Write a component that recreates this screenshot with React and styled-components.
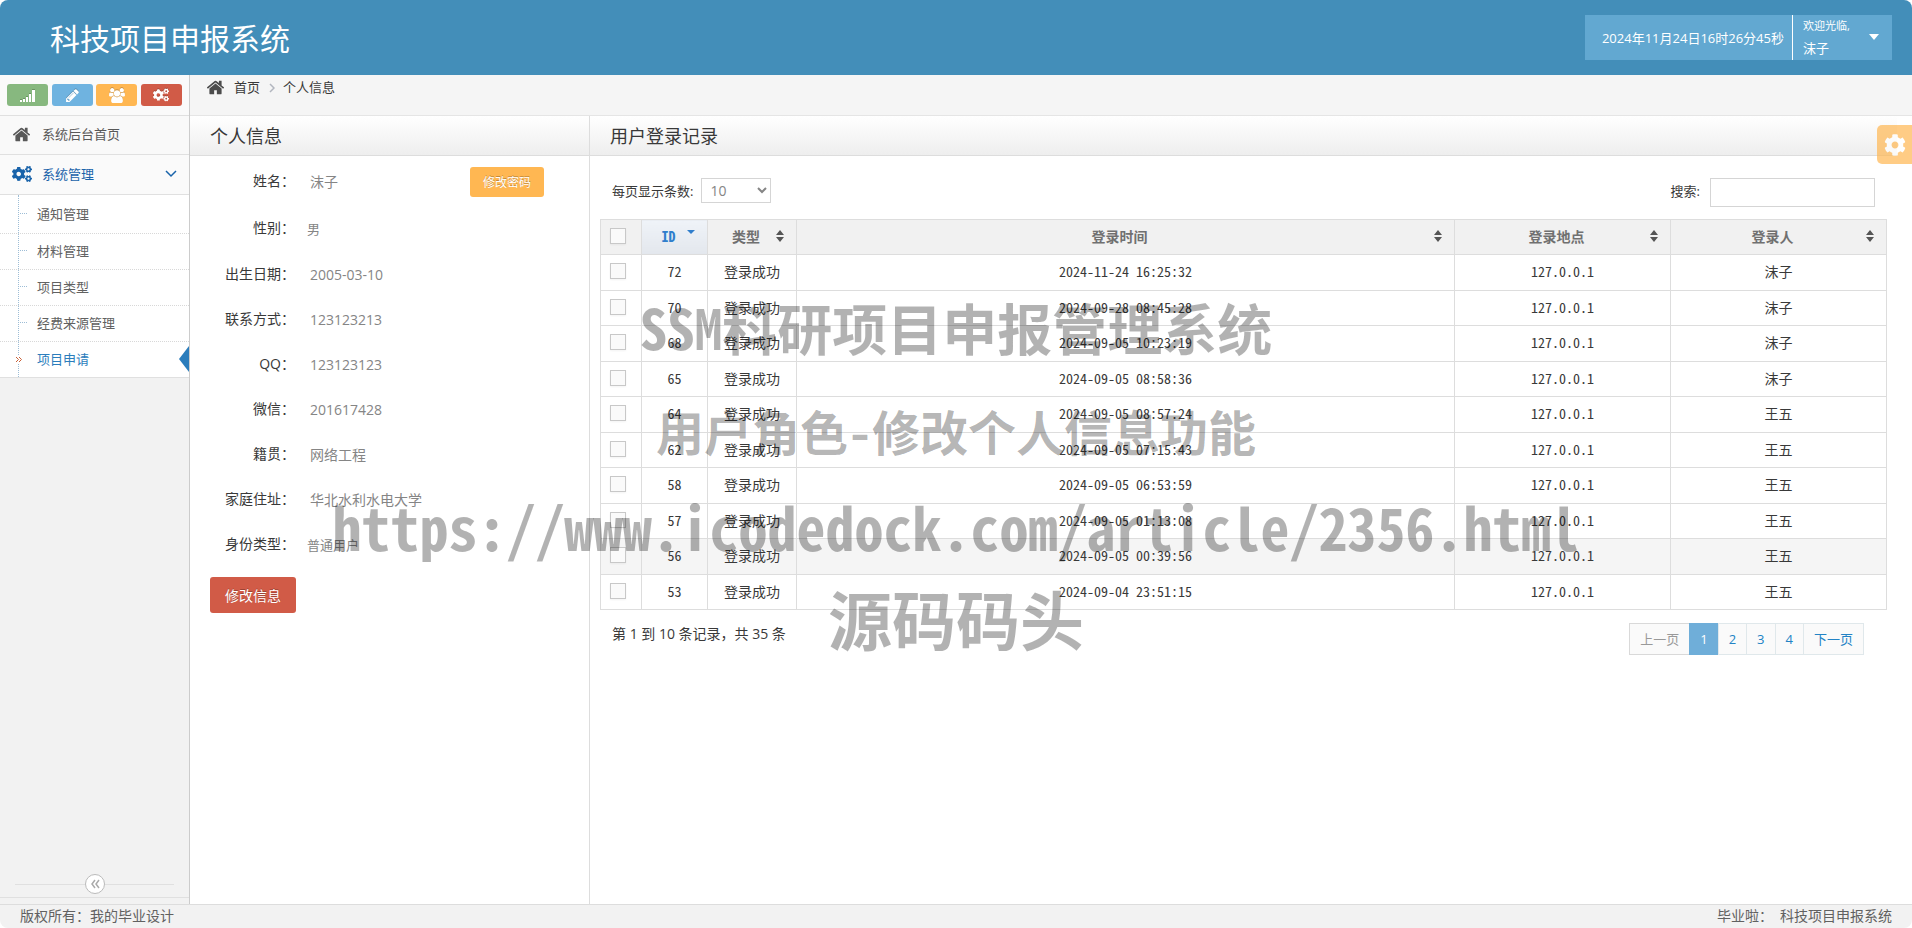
import React, { useState } from "react";
import { styled, createGlobalStyle, css } from "styled-components";
import { FaCog, FaCogs } from "react-icons/fa";

const GlobalStyle = createGlobalStyle`
  * {
    box-sizing: border-box;
  }

  body {
    margin: 0;
    background: #fff;
    color: #393939;
    font-family: "Open Sans", "Noto Sans CJK SC", sans-serif;
    font-size: 13px;
    line-height: 20px;
  }

  a {
    color: inherit;
    text-decoration: none;
  }

  button, input, select {
    font-family: inherit;
  }
`;

const monoFont = `"Noto Sans Mono CJK SC", "Liberation Mono", "Noto Sans CJK SC", monospace`;

const Page = styled.div`
  position: relative;
  display: flex;
  flex-direction: column;
  min-height: 100vh;
  border-radius: 8px;
  overflow: hidden;
`;

const Navbar = styled.header`
  display: flex;
  justify-content: space-between;
  align-items: center;
  height: 75px;
  padding: 0 20px 0 50px;
  background: #438eb9;
  color: #fff;
`;

const Brand = styled.a`
  font-size: 30px;
  line-height: 40px;
  padding-top: 2px;
`;

const UserBar = styled.div`
  display: flex;
  height: 45px;
  background: #62a8d1;
`;

const Clock = styled.div`
  padding: 0 8px 0 17px;
  line-height: 46px;
  border-right: 1px solid #fff;
`;

const UserMenu = styled.button`
  display: flex;
  align-items: center;
  justify-content: space-between;
  width: 99px;
  padding: 0 13px 2px 10px;
  border: 0;
  background: transparent;
  color: #fff;
  font-size: 13px;
  line-height: 22px;
  text-align: left;
  cursor: pointer;

  small {
    display: block;
    font-size: 11px;
  }
`;

const Caret = styled.span`
  border: 5px solid transparent;
  border-top: 6px solid #fff;
  border-bottom: 0;
`;

const Main = styled.div`
  flex: 1;
  display: flex;
`;

const Sidebar = styled.aside`
  display: flex;
  flex-direction: column;
  flex: 0 0 190px;
  padding-bottom: 6px;
  border-right: 1px solid #ccc;
  background: #f2f2f2;
`;

const Shortcuts = styled.div`
  display: flex;
  justify-content: space-between;
  align-items: center;
  height: 40px;
  padding: 0 7px;
  background: #fafafa;
`;

const ShortcutButton = styled.button`
  display: flex;
  align-items: center;
  justify-content: center;
  width: 41px;
  height: 22px;
  padding: 0;
  border: 0;
  border-radius: 3px;
  background: ${(props) => props.$color};
  color: #fff;
  cursor: pointer;

  svg {
    filter: drop-shadow(0 -1px 0 rgba(0, 0, 0, 0.2));
  }
`;

const NavItem = styled.a`
  display: flex;
  align-items: center;
  height: ${(props) => (props.$open ? "40px" : "39px")};
  padding: 0 12px 2px;
  border-top: 1px solid #e0e0e0;
  background: ${(props) => (props.$open ? "#fafafa" : "#f9f9f9")};
  color: ${(props) => (props.$open ? "#1963aa" : "#585858")};

  span {
    flex: 1;
  }
`;

const NavIcon = styled.i`
  display: flex;
  width: 30px;
`;

const SubMenu = styled.ul`
  position: relative;
  margin: 0;
  padding: 2px 0 0;
  list-style: none;
  background: #fff;
  border-top: 1px solid #e0e0e0;
  border-bottom: 1px solid #e0e0e0;

  &::before {
    content: "";
    position: absolute;
    top: 0;
    bottom: 0;
    left: 18px;
    border-left: 1px dotted #9dbdd6;
  }
`;

const SubItem = styled.li`
  position: relative;
  height: 36px;
  padding-left: 37px;
  line-height: 34px;
  color: ${(props) => (props.$active ? "#2b7dbc" : "#616161")};

  & + & {
    border-top: 1px dotted #d8d8d8;
  }

  &::before {
    content: "";
    position: absolute;
    top: 16px;
    left: 20px;
    width: 7px;
    border-top: ${(props) => (props.$active ? "0" : "1px dotted #9dbdd6")};
  }

  svg {
    position: absolute;
    top: 13px;
    left: 14px;
    background: #fff;
  }

  ${(props) => props.$active && css`
    &::after {
      content: "";
      position: absolute;
      top: 4px;
      right: 0;
      border: 13px solid transparent;
      border-left: 0;
      border-right: 10px solid #2b7dbc;
    }
  `}
`;

const SidebarCollapse = styled.div`
  display: flex;
  align-items: center;
  margin-top: auto;
  padding: 3px 15px;
  border-bottom: 1px solid #e0e0e0;

  &::before, &::after {
    content: "";
    flex: 1;
    border-top: 1px solid #e0e0e0;
  }

  button {
    display: flex;
    align-items: center;
    justify-content: center;
    width: 20px;
    height: 20px;
    padding: 0;
    border: 1px solid #bbb;
    border-radius: 50%;
    background: #fff;
    color: #aaa;
  }
`;

const Content = styled.main`
  flex: 1;
  min-width: 0;
  display: flex;
  flex-direction: column;
`;

const Breadcrumb = styled.nav`
  display: flex;
  align-items: center;
  height: 41px;
  padding: 0 16px 16px;
  border-bottom: 1px solid #e5e5e5;
  background: #f5f5f5;

  svg {
    color: #4c4c4c;
    margin-right: 9px;
  }

  svg + a + svg {
    color: #b2b6bf;
    margin: 2px 8px 0 9px;
  }
`;

const Columns = styled.div`
  flex: 1;
  display: flex;
`;

const ProfilePanel = styled.section`
  flex: 0 0 400px;
  border-right: 1px solid #ddd;
`;

const LogPanel = styled.section`
  flex: 1;
  min-width: 0;
  padding-right: 15px;
`;

const PanelTitle = styled.h4`
  height: 40px;
  margin: 0;
  padding-left: 20px;
  border-bottom: 1px solid #ddd;
  background: linear-gradient(#fff, #eee);
  font-size: 18px;
  font-weight: 400;
  line-height: 41px;
`;

const Profile = styled.dl`
  margin: 0;
  padding-top: 2px;
`;

const ProfileRow = styled.div`
  display: flex;
  align-items: center;
  height: ${(props) => (props.$tall ? "47px" : "45px")};
  font-size: 14px;

  dt {
    width: 105px;
    padding-bottom: 2px;
    text-align: right;
  }

  dd {
    flex: 1;
    margin: 0;
    padding-left: ${(props) => (props.$plain ? "12px" : "15px")};
    color: #858585;
    font-size: ${(props) => (props.$plain ? "13px" : "14px")};
  }
`;

const Button = styled.button`
  border: 0;
  border-radius: 3px;
  color: #fff;
  cursor: pointer;
  text-shadow: 0 -1px 0 rgba(0, 0, 0, 0.25);
`;

const PasswordButton = styled(Button)`
  width: 74px;
  height: 30px;
  margin-right: 45px;
  padding: 0;
  background: #ffb752;
  font-size: 12px;
`;

const EditButton = styled(Button)`
  width: 86px;
  height: 36px;
  margin: 10px 0 0 20px;
  padding: 0;
  background: #d15b47;
  font-size: 14px;
`;

const LogBody = styled.div`
  padding: 0 10px;
`;

const Toolbar = styled.div`
  display: flex;
  justify-content: space-between;
  height: 63px;
  padding: 22px 12px 0;
  line-height: 26px;

  select {
    width: 70px;
    height: 25px;
    margin-left: 8px;
    padding: 0 4px;
    border: 1px solid #d5d5d5;
    background: #fff;
    color: #858585;
    font-size: 14px;
  }

  input {
    width: 165px;
    height: 29px;
    margin-left: 10px;
    border: 1px solid #d5d5d5;
  }

  label {
    display: flex;
    align-items: flex-start;
  }
`;

const Table = styled.table`
  width: 100%;
  table-layout: fixed;
  border-collapse: collapse;
  font-family: ${monoFont};
  font-size: 14px;

  th, td {
    padding: 0 0 3px;
    border: 1px solid #ddd;
    text-align: center;
  }

  th {
    height: 35px;
    background: #f1f1f1;
    color: #707070;
  }

  td {
    height: 35px;
  }

  tr:nth-child(odd) td {
    height: 36px;
  }
`;

const LogRow = styled.tr`
  background: ${(props) => (props.$hover ? "#f5f5f5" : "#fff")};
`;

const SortHeader = styled.th`
  && {
    color: ${(props) => (props.$sorted ? "#307ecc" : "#707070")};
    background: ${(props) => (props.$sorted ? "linear-gradient(#eff3f8, #e3e7ed)" : "#f1f1f1")};
  }

  div {
    display: flex;
    align-items: center;
    padding: 0 12px 0 8px;
  }

  span {
    flex: 1;
  }
`;

const Checkbox = styled.input`
  appearance: none;
  display: block;
  width: 16px;
  height: 16px;
  margin: 0 0 0 9px;
  border: 1px solid #c8c8c8;
  background: #fafafa;
  box-shadow: 0 1px 2px rgba(0, 0, 0, 0.05);

  &:checked {
    background: #6faed9;
  }
`;

const TableFooter = styled.div`
  display: flex;
  justify-content: space-between;
  padding: 13px 23px 0 12px;
  font-size: 14px;
  line-height: 22px;
`;

const Pagination = styled.nav`
  display: flex;
  font-size: 13px;
`;

const PageLink = styled.a`
  height: 32px;
  padding: 0 10px;
  margin-left: -1px;
  border: 1px solid ${(props) => (props.$active ? "#6faed9" : "#e0e8eb")};
  background: ${(props) => (props.$active ? "#6faed9" : "#fafafa")};
  color: ${(props) => (props.$active ? "#fff" : "#2283c5")};
  line-height: 31px;

  ${(props) => props.$disabled && css`
    border-color: #d9d9d9;
    color: #999;
  `}
`;

const Footer = styled.footer`
  display: flex;
  justify-content: space-between;
  height: 24px;
  padding: 0 20px;
  border-top: 1px solid #ddd;
  background: #f2f2f2;
  color: #616161;
  font-family: ${monoFont};
  font-size: 14px;
  line-height: 21px;
  white-space: pre;
`;

const SettingsButton = styled.button`
  position: absolute;
  top: 125px;
  right: 0;
  display: flex;
  align-items: center;
  justify-content: center;
  width: 35px;
  height: 39px;
  padding: 0;
  border: 0;
  border-radius: 5px 0 0 5px;
  background: #ffb752;
  color: #fff;
  opacity: 0.7;
`;

const Watermark = styled.div`
  position: absolute;
  top: 274px;
  left: 0;
  right: 0;
  color: rgba(0, 0, 0, 0.3);
  font-family: ${monoFont};
  font-weight: 700;
  text-align: center;
  white-space: nowrap;
  pointer-events: none;
`;

const WatermarkLine = styled.div`
  font-size: ${(props) => props.$size}px;
  line-height: ${(props) => props.$height}px;
`;

const HomeIcon = ({ size }) => (
  <svg width={size} height={size} viewBox="0 0 1792 1792" fill="currentColor">
    <path d="M1472 992v480q0 26-19 45t-45 19h-384v-384h-256v384h-384q-26 0-45-19t-19-45v-480q0-1 .5-3t.5-3l575-474 575 474q1 2 1 6zm223-69l-62 74q-8 9-21 11h-3q-13 0-21-7l-692-577-692 577q-12 8-24 7-13-2-21-11l-62-74q-8-10-7-23.5t11-21.5l719-599q32-26 76-26t76 26l244 204v-195q0-14 9-23t23-9h192q14 0 23 9t9 23v408l219 182q10 8 11 21.5t-7 23.5z" />
  </svg>
);

const SignalIcon = () => (
  <svg width="15" height="13" viewBox="0 0 15 13" fill="currentColor">
    <path d="M0 11h2v2H0zM3 10h2v3H3zM6 8h2v5H6zM9 5h2v8H9zM12 1h3v12h-3z" />
  </svg>
);

const PencilIcon = () => (
  <svg width="15" height="15" viewBox="0 0 1792 1792" fill="currentColor">
    <path d="M491 1536l91-91-235-235-91 91v107h128v128h107zm523-928q0-22-22-22-10 0-17 7l-542 542q-7 7-7 17 0 22 22 22 10 0 17-7l542-542q7-7 7-17zm-54-192l416 416-832 832h-416v-416zm683 96q0 53-37 90l-166 166-416-416 166-165q36-38 90-38 53 0 91 38l235 234q37 39 37 91z" />
  </svg>
);

const GroupIcon = () => (
  <svg width="16" height="15" viewBox="0 0 1920 1792" fill="currentColor">
    <path d="M593 896q-162 5-265 128h-134q-82 0-138-40.5t-56-118.5q0-353 124-353 6 0 43.5 21t97.5 42.5 119 21.5q67 0 133-23-5 37-5 66 0 139 81 256zm1071 637q0 120-73 189.5t-194 69.5h-874q-121 0-194-69.5t-73-189.5q0-53 3.5-103.5t14-109 26.5-108.5 43-97.5 62-81 85.5-53.5 111.5-20q10 0 43 21.5t73 48 107 48 135 21.5 135-21.5 107-48 73-48 43-21.5q61 0 111.5 20t85.5 53.5 62 81 43 97.5 26.5 108.5 14 109 3.5 103.5zm-1024-1277q0 106-75 181t-181 75-181-75-75-181 75-181 181-75 181 75 75 181zm704 384q0 159-112.5 271.5t-271.5 112.5-271.5-112.5-112.5-271.5 112.5-271.5 271.5-112.5 271.5 112.5 112.5 271.5zm576 225q0 78-56 118.5t-138 40.5h-134q-103-123-265-128 81-117 81-256 0-29-5-66 66 23 133 23 59 0 119-21.5t97.5-42.5 43.5-21q124 0 124 353zm-128-609q0 106-75 181t-181 75-181-75-75-181 75-181 181-75 181 75 75 181z" />
  </svg>
);

const LineIcon = ({ d, width, height, color = "currentColor", stroke = 1.5 }) => (
  <svg width={width} height={height} viewBox={`0 0 ${width} ${height}`} fill="none" stroke={color} strokeWidth={stroke}>
    <path d={d} />
  </svg>
);

const SortIcon = ({ sorted }) => (
  <svg width="8" height="12" viewBox="0 0 8 12" fill={sorted ? "#307ecc" : "#555"}>
    {sorted ? <path d="M0 0h8L4 4z" /> : <path d="M4 0l4 5H0zM0 7h8l-4 5z" />}
  </svg>
);

const shortcuts = [
  { label: "统计", color: "#87b87f", icon: <SignalIcon /> },
  { label: "编辑", color: "#6fb3e0", icon: <PencilIcon /> },
  { label: "用户", color: "#ffb752", icon: <GroupIcon /> },
  { label: "设置", color: "#d15b47", icon: <FaCogs size={16} /> },
];

const subMenu = ["通知管理", "材料管理", "项目类型", "经费来源管理", "项目申请"];

const profile = [
  { label: "姓名", value: "沫子", tall: true, password: true },
  { label: "性别", value: "男", tall: true, plain: true },
  { label: "出生日期", value: "2005-03-10" },
  { label: "联系方式", value: "123123213" },
  { label: "QQ", value: "123123123" },
  { label: "微信", value: "201617428" },
  { label: "籍贯", value: "网络工程" },
  { label: "家庭住址", value: "华北水利水电大学" },
  { label: "身份类型", value: "普通用户", plain: true },
];

const columns = ["ID", "类型", "登录时间", "登录地点", "登录人"];

const logs = [
  { id: 72, time: "2024-11-24 16:25:32", user: "沫子" },
  { id: 70, time: "2024-09-28 08:45:28", user: "沫子" },
  { id: 68, time: "2024-09-05 10:23:19", user: "沫子" },
  { id: 65, time: "2024-09-05 08:58:36", user: "沫子" },
  { id: 64, time: "2024-09-05 08:57:24", user: "王五" },
  { id: 62, time: "2024-09-05 07:15:43", user: "王五" },
  { id: 58, time: "2024-09-05 06:53:59", user: "王五" },
  { id: 57, time: "2024-09-05 01:13:08", user: "王五" },
  { id: 56, time: "2024-09-05 00:39:56", user: "王五" },
  { id: 53, time: "2024-09-04 23:51:15", user: "王五" },
];

const App = () => {
  const [selected, setSelected] = useState([]);
  const [hovered, setHovered] = useState(56);

  function toggle(id) {
    setSelected(selected.includes(id) ? selected.filter((item) => item !== id) : [...selected, id]);
  }

  function toggleAll() {
    setSelected(selected.length === logs.length ? [] : logs.map((log) => log.id));
  }

  return (
    <Page>
      <GlobalStyle />
      <Navbar>
        <Brand href="#">科技项目申报系统</Brand>
        <UserBar>
          <Clock>2024年11月24日16时26分45秒</Clock>
          <UserMenu>
            <span><small>欢迎光临,</small>沫子</span>
            <Caret />
          </UserMenu>
        </UserBar>
      </Navbar>

      <Main>
        <Sidebar>
          <Shortcuts>
            {shortcuts.map((item) => (
              <ShortcutButton key={item.label} $color={item.color} aria-label={item.label}>{item.icon}</ShortcutButton>
            ))}
          </Shortcuts>
          <NavItem href="#">
            <NavIcon><HomeIcon size={19} /></NavIcon>
            <span>系统后台首页</span>
          </NavItem>
          <NavItem href="#" $open>
            <NavIcon><FaCogs size={20} /></NavIcon>
            <span>系统管理</span>
            <LineIcon width={12} height={8} d="M1 1l5 5 5-5" />
          </NavItem>
          <SubMenu>
            {subMenu.map((item) => (
              <SubItem key={item} $active={item === "项目申请"}>
                {item === "项目申请" && <LineIcon width={9} height={9} stroke={1} color="#c86139" d="M2 2l2.500 2.500L2 7M5 2l2.500 2.500L5 7" />}
                <a href="#">{item}</a>
              </SubItem>
            ))}
          </SubMenu>
          <SidebarCollapse>
            <button aria-label="收起">
              <LineIcon width={10} height={10} d="M5 1L2 5l3 4M9 1L6 5l3 4" />
            </button>
          </SidebarCollapse>
        </Sidebar>

        <Content>
          <Breadcrumb>
            <HomeIcon size={19} />
            <a href="#">首页</a>
            <LineIcon width={6} height={10} d="M1 1l4 4-4 4" />
            <span>个人信息</span>
          </Breadcrumb>
          <Columns>
            <ProfilePanel>
              <PanelTitle>个人信息</PanelTitle>
              <Profile>
                {profile.map((item) => (
                  <ProfileRow key={item.label} $tall={item.tall} $plain={item.plain}>
                    <dt>{item.label}：</dt>
                    <dd>{item.value}</dd>
                    {item.password && <PasswordButton>修改密码</PasswordButton>}
                  </ProfileRow>
                ))}
              </Profile>
              <EditButton>修改信息</EditButton>
            </ProfilePanel>

            <LogPanel>
              <PanelTitle>用户登录记录</PanelTitle>
              <LogBody>
                <Toolbar>
                  <label>
                    每页显示条数:
                    <select defaultValue="10">
                      <option>10</option>
                      <option>25</option>
                      <option>50</option>
                      <option>100</option>
                    </select>
                  </label>
                  <label>
                    搜索:
                    <input type="text" />
                  </label>
                </Toolbar>
                <Table>
                  <colgroup>
                    <col width="41" />
                    <col width="66" />
                    <col width="89" />
                    <col />
                    <col width="216" />
                    <col width="216" />
                  </colgroup>
                  <thead>
                    <tr>
                      <th><Checkbox type="checkbox" aria-label="全选" checked={selected.length === logs.length} onChange={toggleAll} /></th>
                      {columns.map((name) => (
                        <SortHeader key={name} $sorted={name === "ID"}>
                          <div><span>{name}</span><SortIcon sorted={name === "ID"} /></div>
                        </SortHeader>
                      ))}
                    </tr>
                  </thead>
                  <tbody>
                    {logs.map((log) => (
                      <LogRow key={log.id} $hover={hovered === log.id} onMouseEnter={() => setHovered(log.id)}>
                        <td><Checkbox type="checkbox" aria-label={`选择 ${log.id}`} checked={selected.includes(log.id)} onChange={() => toggle(log.id)} /></td>
                        <td>{log.id}</td>
                        <td>登录成功</td>
                        <td>{log.time}</td>
                        <td>127.0.0.1</td>
                        <td>{log.user}</td>
                      </LogRow>
                    ))}
                  </tbody>
                </Table>
                <TableFooter>
                  <span>第 1 到 10 条记录，共 35 条</span>
                  <Pagination>
                    <PageLink href="#" $disabled>上一页</PageLink>
                    <PageLink href="#" $active>1</PageLink>
                    <PageLink href="#">2</PageLink>
                    <PageLink href="#">3</PageLink>
                    <PageLink href="#">4</PageLink>
                    <PageLink href="#">下一页</PageLink>
                  </Pagination>
                </TableFooter>
              </LogBody>
            </LogPanel>
          </Columns>
        </Content>
      </Main>

      <Footer>
        <span>版权所有：我的毕业设计</span>
        <span>毕业啦： 科技项目申报系统</span>
      </Footer>

      <SettingsButton aria-label="页面设置"><FaCog size={22} /></SettingsButton>

      <Watermark>
        <WatermarkLine $size={55} $height={104}>SSM科研项目申报管理系统</WatermarkLine>
        <WatermarkLine $size={48} $height={104}>用户角色-修改个人信息功能</WatermarkLine>
        <WatermarkLine $size={58} $height={88}>https://www.icodedock.com/article/2356.html</WatermarkLine>
        <WatermarkLine $size={64} $height={94}>源码码头</WatermarkLine>
      </Watermark>
    </Page>
  );
};

export default App;
